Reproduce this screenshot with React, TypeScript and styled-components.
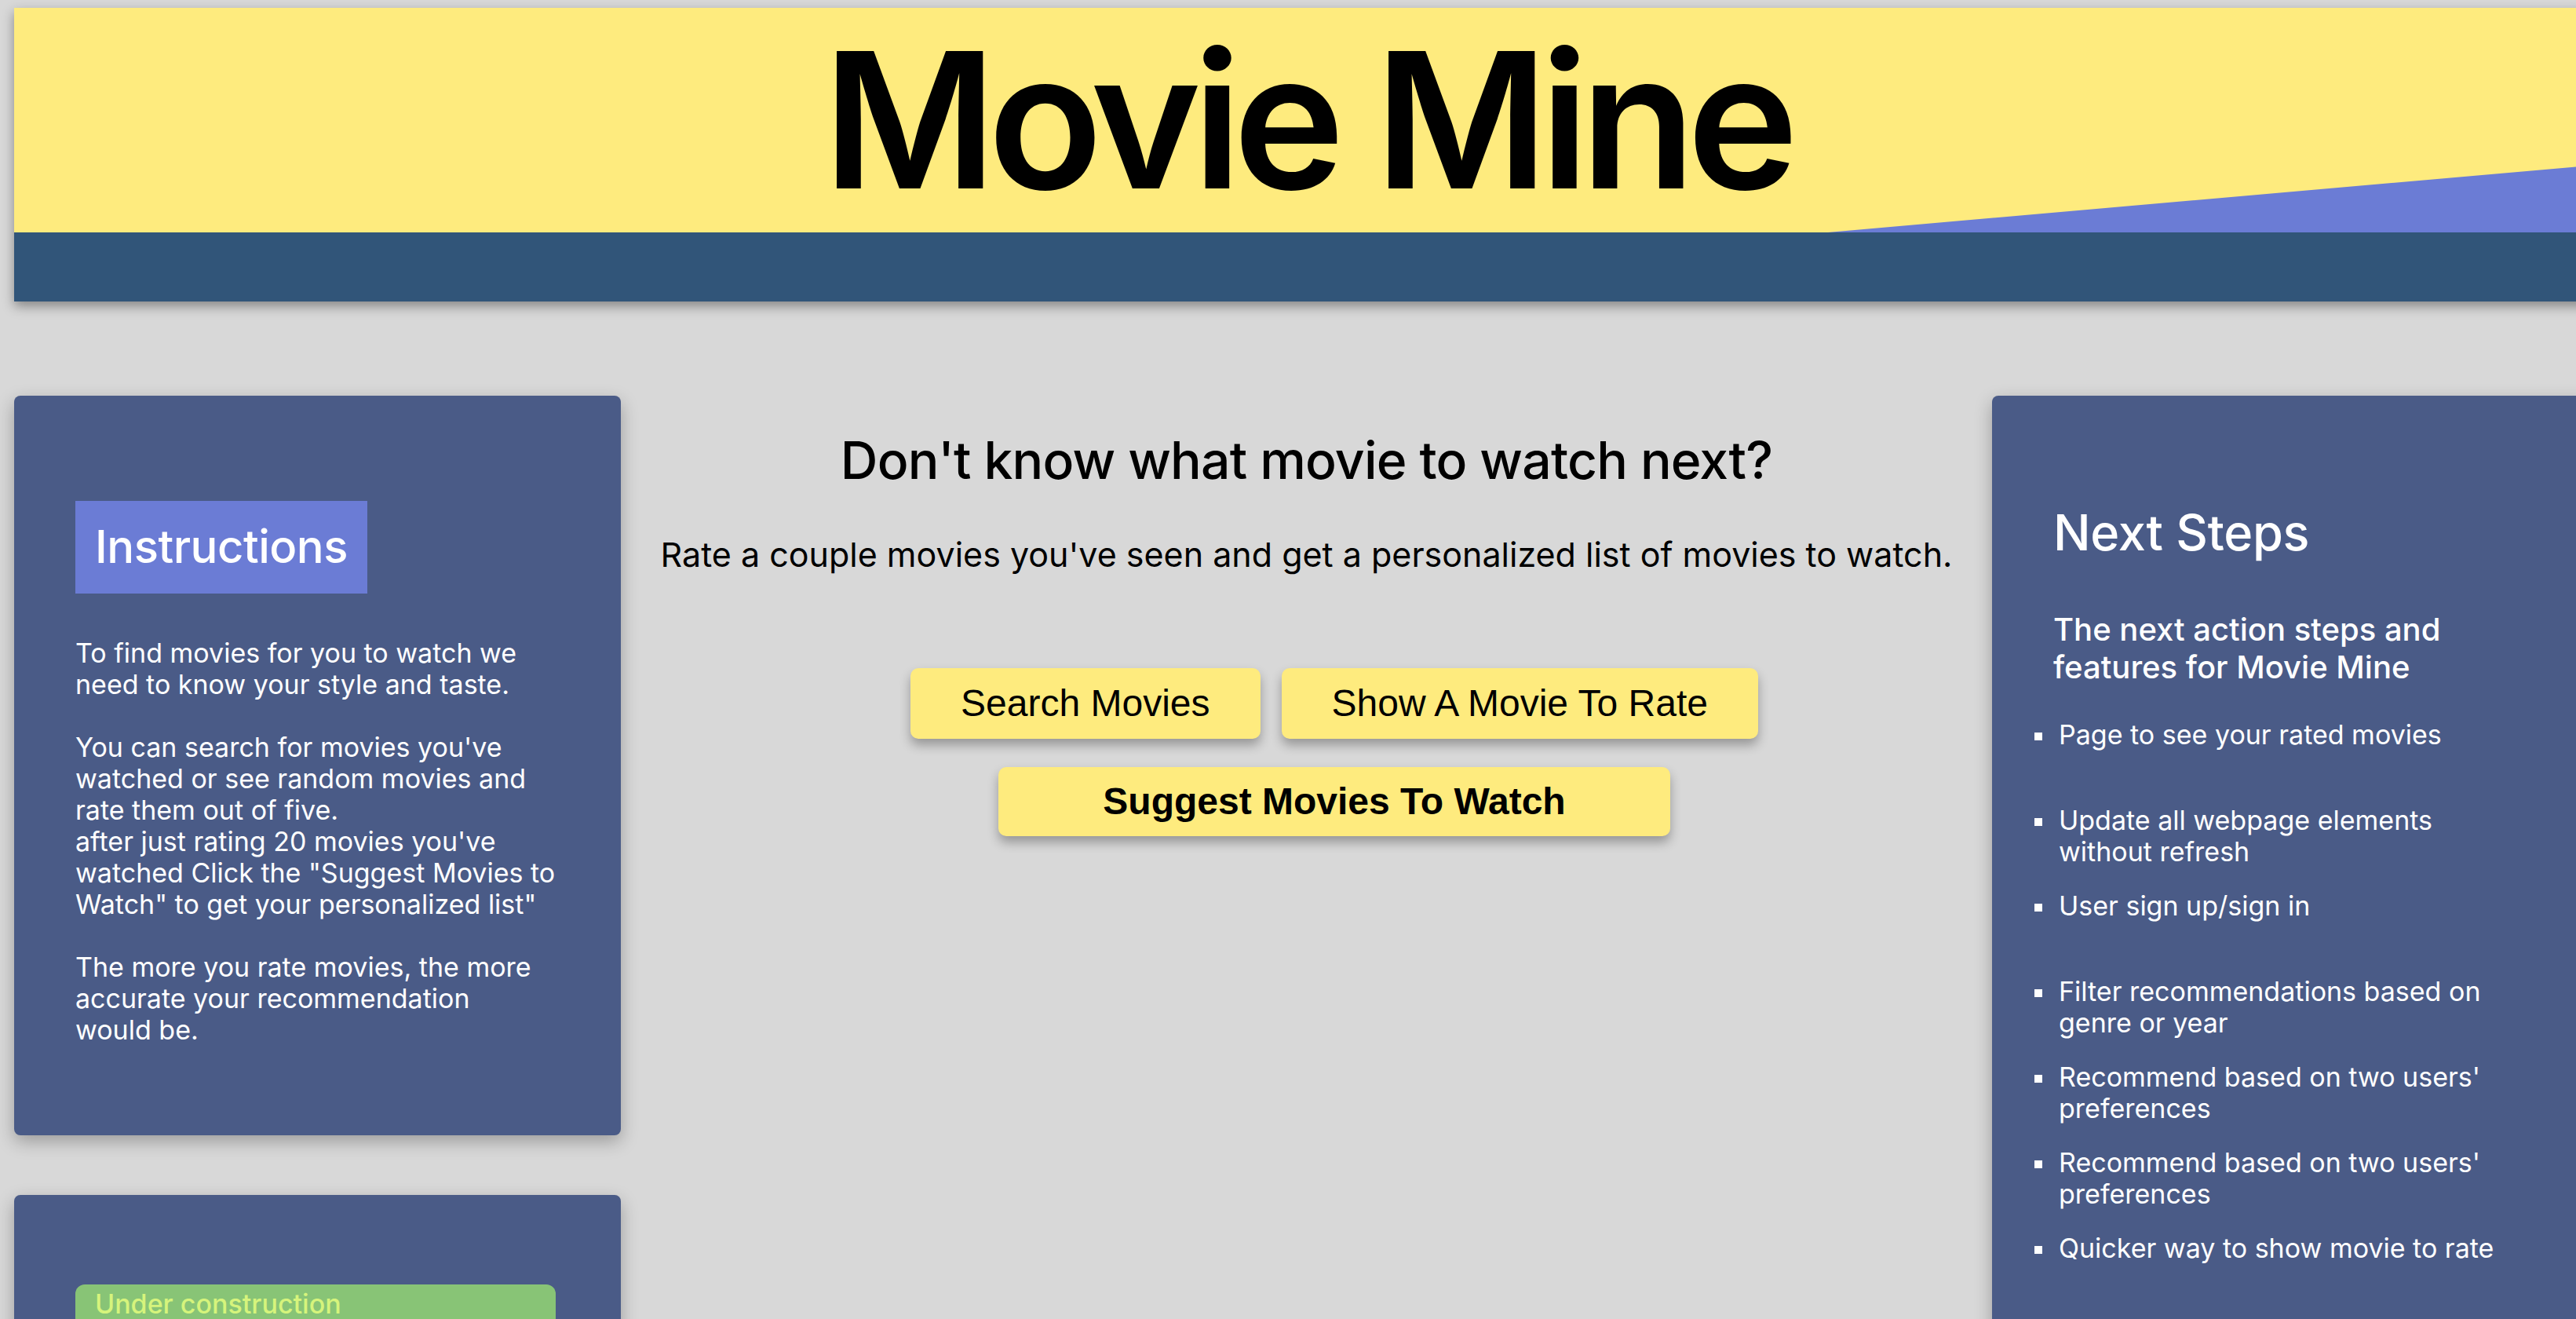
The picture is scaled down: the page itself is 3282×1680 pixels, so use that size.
import React from "react";
import styled, { createGlobalStyle } from "styled-components";

const GlobalStyle = createGlobalStyle`
  html, body {
    margin: 0;
    padding: 0;
    background: #d8d8d8;
    overflow: hidden;
  }
  body {
    font-family: "Inter", "Noto Sans", sans-serif;
    color: #000;
  }
  * { box-sizing: border-box; }
`;

const Page = styled.div`
  width: 3311px;
  min-height: 1680px;
  padding: 10px 0 0 18px;
`;

const Header = styled.header`
  display: flex;
  flex-direction: column;
  box-shadow: 0 6px 14px rgba(0, 0, 0, 0.38);
`;

const TitleBand = styled.div`
  position: relative;
  height: 286px;
  background: #feeb7e;
  display: flex;
  align-items: center;
  justify-content: center;

  &::after {
    content: "";
    position: absolute;
    right: 0;
    bottom: 0;
    width: 982px;
    height: 86px;
    background: #6b7cd5;
    clip-path: polygon(0 100%, 100% 0, 100% 100%);
  }
`;

const Title = styled.h1`
  margin: 0;
  font-size: 240px;
  font-weight: 600;
  line-height: 1.2;
  letter-spacing: -11px;
  color: #000;
`;

const NavBand = styled.div`
  height: 88px;
  background: #315579;
`;

const Main = styled.main`
  display: grid;
  grid-template-columns: 773px 1fr 773px;
  align-items: start;
  margin-top: 120px;
`;

const SideColumn = styled.div`
  display: flex;
  flex-direction: column;
  gap: 76px;
`;

const Card = styled.section<{ $minHeight: number; $padTop: number; $padRight: number }>`
  background: #4a5b87;
  border-radius: 8px;
  box-shadow: 0 8px 22px rgba(0, 0, 0, 0.28);
  color: #fff;
  min-height: ${(p) => p.$minHeight}px;
  padding: ${(p) => p.$padTop}px ${(p) => p.$padRight}px 40px 78px;
`;

const BoxTitle = styled.h2`
  display: inline-block;
  margin: 0;
  padding: 29px 25px 31px;
  background: #6b7cd5;
  font-size: 58px;
  font-weight: 500;
  line-height: 58px;
  letter-spacing: -0.5px;
`;

const BodyText = styled.p`
  margin: 56px 0 0;
  font-size: 34px;
  line-height: 40px;
  font-weight: 400;
  white-space: nowrap;
`;

const ConstructionBox = styled.div`
  width: 612px;
  padding: 5px 25px 20px;
  background: #88c476;
  border-radius: 12px;
  color: #d6f47c;
  font-size: 34px;
  line-height: 40px;
  font-weight: 500;
`;

const Center = styled.div`
  display: flex;
  flex-direction: column;
  align-items: center;
  padding-top: 43px;
`;

const Heading = styled.h2`
  margin: 0;
  font-size: 66px;
  line-height: 79px;
  font-weight: 500;
  letter-spacing: -0.8px;
`;

const Lead = styled.p`
  margin: 55px 0 0;
  font-size: 43px;
  line-height: 50px;
  font-weight: 400;
`;

const ButtonGroup = styled.div`
  display: flex;
  flex-direction: column;
  align-items: center;
  gap: 36px;
  margin-top: 120px;
  padding-left: 71px;
`;

const ButtonRow = styled.div`
  display: flex;
  gap: 27px;
`;

const ActionButton = styled.button<{ $primary?: boolean }>`
  font-family: "Liberation Sans", Arial, sans-serif;
  font-size: 48px;
  font-weight: ${(p) => (p.$primary ? 700 : 400)};
  line-height: 55px;
  color: #000;
  background: #feeb7e;
  border: none;
  border-radius: 10px;
  padding: ${(p) => (p.$primary ? "16px 133px 17px" : "17px 64px 18px")};
  box-shadow: 0 8px 14px rgba(0, 0, 0, 0.3);
  cursor: pointer;
`;

const StepsTitle = styled.h2`
  margin: 0;
  font-size: 63px;
  line-height: 76px;
  font-weight: 500;
  letter-spacing: -0.3px;
`;

const StepsIntro = styled.h3`
  margin: 62px 0 0;
  font-size: 40px;
  line-height: 48px;
  font-weight: 500;
`;

const StepsList = styled.ul`
  margin: 42px 0 0;
  padding: 0 0 0 7px;
  list-style: none;
`;

const StepItem = styled.li<{ $extra?: boolean }>`
  position: relative;
  font-size: 34px;
  line-height: 40px;
  font-weight: 400;
  margin-bottom: ${(p) => (p.$extra ? 69 : 29)}px;

  &::before {
    content: "";
    position: absolute;
    left: -31px;
    top: 17px;
    width: 10px;
    height: 10px;
    background: #fff;
  }
`;

const steps: { text: string; extra?: boolean }[] = [
  { text: "Page to see your rated movies", extra: true },
  { text: "Update all webpage elements without refresh" },
  { text: "User sign up/sign in", extra: true },
  { text: "Filter recommendations based on genre or year" },
  { text: "Recommend based on two users' preferences" },
  { text: "Recommend based on two users' preferences" },
  { text: "Quicker way to show movie to rate" },
];

export default function App() {
  return (
    <>
      <GlobalStyle />
      <Page>
        <Header>
          <TitleBand>
            <Title>Movie Mine</Title>
          </TitleBand>
          <NavBand />
        </Header>
        <Main>
          <SideColumn>
            <Card $minHeight={942} $padTop={134} $padRight={40}>
              <BoxTitle>Instructions</BoxTitle>
              <BodyText>
                To find movies for you to watch we
                <br />
                need to know your style and taste.
                <br />
                <br />
                You can search for movies you've
                <br />
                watched or see random movies and
                <br />
                rate them out of five.
                <br />
                after just rating 20 movies you've
                <br />
                watched Click the "Suggest Movies to
                <br />
                Watch" to get your personalized list"
                <br />
                <br />
                The more you rate movies, the more
                <br />
                accurate your recommendation
                <br />
                would be.
              </BodyText>
            </Card>
            <Card $minHeight={400} $padTop={114} $padRight={40}>
              <ConstructionBox>Under construction</ConstructionBox>
            </Card>
          </SideColumn>
          <Center>
            <Heading>Don't know what movie to watch next?</Heading>
            <Lead>
              Rate a couple movies you've seen and get a personalized list of
              movies to watch.
            </Lead>
            <ButtonGroup>
              <ButtonRow>
                <ActionButton>Search Movies</ActionButton>
                <ActionButton>Show A Movie To Rate</ActionButton>
              </ButtonRow>
              <ButtonRow>
                <ActionButton $primary>Suggest Movies To Watch</ActionButton>
              </ButtonRow>
            </ButtonGroup>
          </Center>
          <Card $minHeight={1300} $padTop={136} $padRight={88}>
            <StepsTitle>Next Steps</StepsTitle>
            <StepsIntro>
              The next action steps and
              <br />
              features for Movie Mine
            </StepsIntro>
            <StepsList>
              {steps.map((s, i) => (
                <StepItem key={i} $extra={s.extra}>
                  {s.text}
                </StepItem>
              ))}
            </StepsList>
          </Card>
        </Main>
      </Page>
    </>
  );
}
